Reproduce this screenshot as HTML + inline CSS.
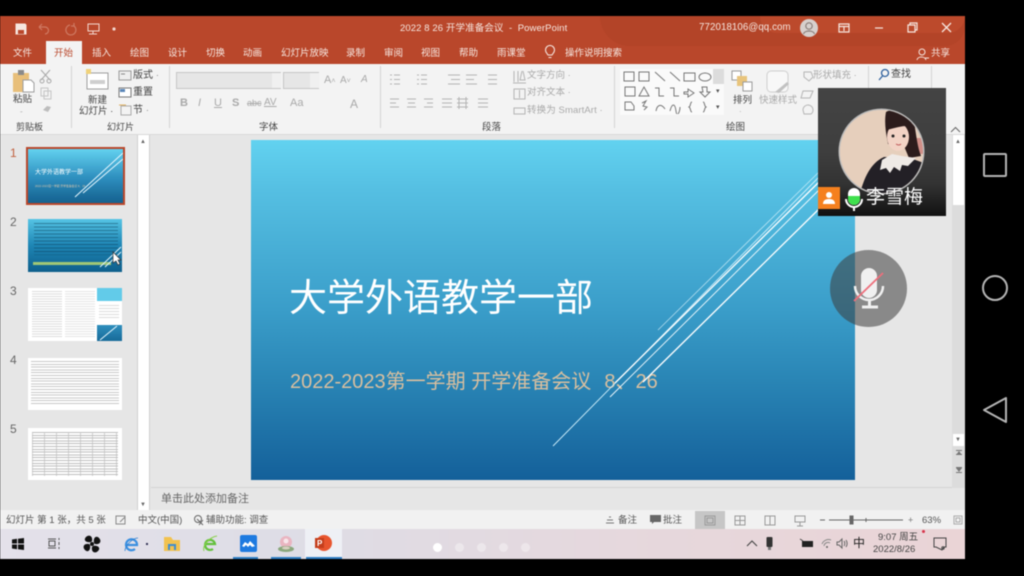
<!DOCTYPE html>
<html lang="zh"><head><meta charset="utf-8"><style>
html,body{margin:0;padding:0;background:#000}
body{width:1024px;height:576px;position:relative;overflow:hidden;font-family:"Liberation Sans","Noto Sans CJK SC",sans-serif;color:#444}
#s,#s div,#s svg{position:absolute}
#s{left:0;top:0;width:1024px;height:576px;filter:blur(.5px)}
.t{white-space:nowrap;line-height:1;font-size:9.5px;color:#444}
.g{color:#a9a9a9}
.w{color:#f6e6df}
.sep{width:1px;background:#d4d4d4;top:66px;height:62px}
.n{font-size:12px;color:#666;left:10px;line-height:1}
</style></head><body><div id="s">
<!-- window -->
<div style="left:0;top:16px;width:965px;height:543px;background:#e6e6e6"></div>
<!-- title bar -->
<div style="left:0;top:16px;width:965px;height:48px;background:#b9472b"></div>
<div style="left:600px;top:16px;width:365px;height:30px;background:#ab4026;border-radius:0 0 60px 90px;opacity:.4"></div>
<div style="left:760px;top:16px;width:205px;height:17px;background:#c24e2e;border-radius:0 0 30px 30px;opacity:.6"></div>
<svg style="left:14px;top:22px" width="110" height="14" viewBox="0 0 110 14" fill="none" stroke="#f3d8cf"><path d="M2 2h9l1 1v9H2z" fill="#f6e6df" stroke="#f6e6df"/><path d="M4 8h6v4H4z" fill="#b9472b" stroke="none"/><path d="M25 5l3-3M25 5l3 3M25 5h6a3.500 3.500 0 0 1 0 7" stroke="#cf7a63" stroke-width="1.200"/><path d="M56 3a5 5 0 1 0 4 1M60 1v3h-3" stroke="#cf7a63" stroke-width="1.200"/><rect x="74" y="2" width="11" height="7" stroke="#f3d8cf"/><path d="M79 9v3M75 12h8" stroke="#f3d8cf"/><circle cx="100" cy="7" r="1.600" fill="#f3d8cf" stroke="none"/></svg>
<div class="t w" style="left:400px;top:24px;font-size:9.5px;letter-spacing:.1px">2022 8 26 开学准备会议 &nbsp;-&nbsp; PowerPoint</div>
<div class="t w" style="left:699px;top:23px;font-size:9.7px;letter-spacing:.1px">772018106@qq.com</div>
<svg style="left:799px;top:18px" width="20" height="20" viewBox="0 0 20 20"><circle cx="10" cy="10" r="9" fill="#d7d0cd"/><circle cx="10" cy="8" r="3.200" fill="none" stroke="#8b7f7a" stroke-width="1.200"/><path d="M4.500 16c1-4 10-4 11 0" fill="none" stroke="#8b7f7a" stroke-width="1.200"/></svg>
<svg style="left:836px;top:20px" width="120" height="16" viewBox="0 0 120 16" fill="none" stroke="#f6e6df" stroke-width="1.200"><path d="M3 4h10v8H3zM3 6.500h10" /><path d="M8 7v4" /><path d="M39 8h8"/><path d="M72 5h7v7h-7zM74 5V3h7v7h-2"/><path d="M106 3l9 9M115 3l-9 9" stroke-width="1.300"/></svg>
<!-- tabs -->
<div style="left:46px;top:41px;width:36px;height:23px;background:#f3f3f3"></div>
<div class="t w" style="left:13px;top:49px">文件</div>
<div class="t" style="left:54px;top:49px;color:#b9472b">开始</div>
<div class="t w" style="left:92px;top:49px">插入</div>
<div class="t w" style="left:130px;top:49px">绘图</div>
<div class="t w" style="left:168px;top:49px">设计</div>
<div class="t w" style="left:206px;top:49px">切换</div>
<div class="t w" style="left:243px;top:49px">动画</div>
<div class="t w" style="left:281px;top:49px">幻灯片放映</div>
<div class="t w" style="left:346px;top:49px">录制</div>
<div class="t w" style="left:384px;top:49px">审阅</div>
<div class="t w" style="left:421px;top:49px">视图</div>
<div class="t w" style="left:459px;top:49px">帮助</div>
<div class="t w" style="left:497px;top:49px">雨课堂</div>
<svg style="left:544px;top:45px" width="12" height="15" viewBox="0 0 12 15" fill="none" stroke="#f6e6df" stroke-width="1.100"><path d="M4 10C3 8 1.500 7.500 1.500 5a4.500 4.500 0 0 1 9 0c0 2.500-1.500 3-2.500 5zM4.500 12.500h3"/></svg>
<div class="t w" style="left:565px;top:49px">操作说明搜索</div>
<svg style="left:916px;top:47px" width="14" height="14" viewBox="0 0 14 14" fill="none" stroke="#f6e6df"><circle cx="6" cy="5" r="3"/><path d="M1 13c.5-4 8-4 9 0M9 11h4"/></svg>
<div class="t w" style="left:931px;top:49px">共享</div>
<!-- ribbon -->
<div style="left:0;top:64px;width:965px;height:71px;background:#f3f3f3"></div>
<div style="left:0;top:134px;width:965px;height:1px;background:#d9d9d9"></div>
<div class="sep" style="left:71px"></div><div class="sep" style="left:169px"></div><div class="sep" style="left:380px"></div><div class="sep" style="left:614px"></div><div class="sep" style="left:868px"></div><div class="sep" style="left:931px"></div>
<svg style="left:950px;top:126px" width="11" height="7" viewBox="0 0 11 7" fill="none" stroke="#666"><path d="M1 6l4.500-4.500L10 6"/></svg>
<!-- clipboard -->
<svg style="left:12px;top:69px" width="24" height="25" viewBox="0 0 24 25"><rect x="1" y="4" width="16" height="19" fill="#e8bf7a"/><rect x="6" y="1" width="6" height="5" fill="#8a8a8a"/><path d="M11 11h8l3 3v9H11z" fill="#fff" stroke="#9d9d9d"/></svg>
<svg style="left:38px;top:68px" width="22" height="48" viewBox="0 0 22 48" fill="none" stroke="#a8a8a8"><path d="M3 2l9 10M12 2L3 12"/><circle cx="4" cy="13" r="2"/><circle cx="11" cy="13" r="2"/><path d="M3 20h7v8H3zM6 23h7v8H6z" stroke="#c4c4c4"/><path d="M5 42l4-4 4 1-3 5z" fill="#bdbdbd" stroke="none"/></svg>
<div class="t" style="left:13px;top:95px;font-size:9.500px">粘贴</div>
<div class="t" style="left:16px;top:123px;font-size:9px">剪贴板</div>
<div class="t g" style="left:20px;top:108px;font-size:8px">-</div>
<!-- slides -->
<svg style="left:85px;top:68px" width="25" height="23" viewBox="0 0 25 23"><rect x="2" y="5" width="21" height="16" fill="#fff" stroke="#9d9d9d"/><rect x="5" y="12" width="15" height="4" fill="#cfcfcf"/><rect x="1" y="1" width="5" height="5" fill="#f0d27a"/></svg>
<div class="t" style="left:88px;top:96px;font-size:9.500px">新建</div>
<div class="t" style="left:79px;top:107px;font-size:9.500px">幻灯片 ·</div>
<div class="t" style="left:107px;top:123px;font-size:9px">幻灯片</div>
<svg style="left:118px;top:69px" width="15" height="48" viewBox="0 0 15 48" fill="none"><rect x="1" y="2" width="12" height="9" stroke="#999" fill="#eee"/><path d="M3 5h4" stroke="#888"/><rect x="1" y="19" width="12" height="9" stroke="#777" fill="#fff"/><path d="M2 20h5v3H2z" fill="#5a86b8"/><rect x="3" y="37" width="10" height="9" stroke="#aaa"/><path d="M1 36h7" stroke="#e0b060"/></svg>
<div class="t" style="left:133px;top:71px;font-size:10px">版式 <span style="color:#999">·</span></div>
<div class="t" style="left:133px;top:88px;font-size:10px">重置</div>
<div class="t" style="left:133px;top:106px;font-size:10px">节 <span style="color:#999">·</span></div>
<!-- font -->
<div style="left:176px;top:72px;width:105px;height:17px;background:#e6e6e6;border:1px solid #c6c6c6;box-sizing:border-box"></div>
<div style="left:272px;top:73px;width:9px;height:15px;background:#f0f0f0"></div>
<div style="left:283px;top:72px;width:36px;height:17px;background:#e6e6e6;border:1px solid #c6c6c6;box-sizing:border-box"></div>
<div style="left:310px;top:73px;width:9px;height:15px;background:#f0f0f0"></div>
<div class="t g" style="left:324px;top:75px;font-size:11px">A<span style="font-size:7px">˄</span></div>
<div class="t g" style="left:340px;top:76px;font-size:10px">A<span style="font-size:7px">˅</span></div>
<div class="t g" style="left:361px;top:75px;font-size:10px;font-style:italic">A</div>
<div class="t g" style="left:180px;top:98px;font-size:11px;font-weight:bold">B</div>
<div class="t g" style="left:198px;top:98px;font-size:11px;font-style:italic">I</div>
<div class="t g" style="left:214px;top:98px;font-size:11px;text-decoration:underline">U</div>
<div class="t g" style="left:232px;top:98px;font-size:11px;font-weight:bold">S</div>
<div class="t g" style="left:247px;top:99px;font-size:9px;text-decoration:line-through">abc</div>
<div class="t g" style="left:264px;top:98px;font-size:10px;text-decoration:underline">AV</div>
<div class="t g" style="left:290px;top:98px;font-size:11px">Aa</div>
<div class="t g" style="left:350px;top:98px;font-size:12px">A</div>
<div class="t" style="left:259px;top:123px;font-size:9.500px">字体</div>
<!-- paragraph -->
<svg style="left:388px;top:73px" width="120" height="38" viewBox="0 0 120 38" fill="none" stroke="#b4b4b4"><path d="M2 2h2M2 6.500h2M2 11h2M6 2h6M6 6.500h6M6 11h6M29 2h2M29 6.500h2M29 11h2M33 2h6M33 6.500h6M33 11h6M60 2h12M63 6.500h9M60 11h12M78 2h11M78 6.500h8M78 11h11M100 2h9M100 6.500h9M100 11h9M2 26h9M2 30h6M2 34h9M19 26h9M20 30h7M19 34h9M36 26h9M39 30h6M36 34h9M54 26h10M54 30h10M54 34h10M69 26h11M69 30h11M69 34h11M71 24v12M78 24v12M90 26h10M90 30h10M90 34h10"/></svg>
<svg style="left:512px;top:68px" width="16" height="50" viewBox="0 0 16 50" fill="none" stroke="#b4b4b4"><path d="M2 3v11M6 3v11M10 3l-2 9h5l-2-9M1 15h13M2 21h11v10H2zM7.500 22v8M2 40h11v6H2z"/></svg>
<div class="t g" style="left:527px;top:71px;font-size:9.500px">文字方向 ·</div>
<div class="t g" style="left:527px;top:88px;font-size:9.500px">对齐文本 ·</div>
<div class="t g" style="left:527px;top:106px;font-size:9.500px;letter-spacing:.1px">转换为 SmartArt ·</div>
<div class="t" style="left:482px;top:123px;font-size:9.500px">段落</div>
<!-- drawing -->
<div style="left:620px;top:69px;width:104px;height:46px;background:#fafafa"></div>
<div style="left:713px;top:69px;width:11px;height:15px;background:#dcdcdc"></div>
<div class="t" style="left:716px;top:88px;font-size:7px;color:#555">▾</div>
<div class="t" style="left:716px;top:104px;font-size:7px;color:#555">▾</div>
<svg style="left:622px;top:70px" width="92" height="44" viewBox="0 0 92 44" fill="none" stroke="#777"><rect x="2" y="2" width="10" height="9"/><rect x="17" y="2" width="10" height="9"/><path d="M33 2l10 9M48 2l10 9"/><rect x="62" y="3" width="11" height="8"/><ellipse cx="83" cy="7" rx="6" ry="4"/><rect x="3" y="17" width="10" height="9"/><path d="M17 26l5-9 5 9zM33 18h4v8h5M48 18h4v8h5M62 22h4v-3l6 4-6 4v-3h-4zM80 17h5v5h3l-5 5-5-5h3z"/><path d="M3 36v-4h6l3 4v4H3zM20 33l4-2-3 5 4 1-3 3M34 41c1-6 5-8 9-2M48 41c2-8 5-8 6 0s4 0 4-4"/><path d="M70 32c-2 0-1 4-3 5 2 1 1 5 3 5M81 32c2 0 1 4 3 5-2 1-1 5-3 5"/></svg>
<svg style="left:731px;top:70px" width="22" height="24" viewBox="0 0 22 24"><rect x="1" y="1" width="9" height="9" fill="#fff" stroke="#999"/><rect x="6" y="6" width="10" height="10" fill="#e8c47c"/><rect x="12" y="12" width="9" height="9" fill="#fff" stroke="#999"/></svg>
<div class="t" style="left:733px;top:96px;font-size:9.500px">排列</div>
<div class="t g" style="left:739px;top:108px;font-size:8px">·</div>
<svg style="left:766px;top:70px" width="26" height="24" viewBox="0 0 26 24"><rect x="1" y="1" width="21" height="21" rx="4" fill="#f8f8f8" stroke="#cfcfcf"/><path d="M9 22l12-10 2 2-10 9z" fill="#c2c2c2"/></svg>
<div class="t g" style="left:759px;top:96px;font-size:9.500px">快速样式</div>
<svg style="left:800px;top:68px" width="17" height="50" viewBox="0 0 17 50" fill="none" stroke="#b5b5b5"><path d="M4 4h7l2 5-4 4-5-4zM3 23h10l-3 7H1zM3 42a5 5 0 1 1 8 4H4z"/></svg>
<div class="t g" style="left:813px;top:71px;font-size:9.500px">形状填充 ·</div>
<div class="t" style="left:726px;top:123px;font-size:9.500px">绘图</div>
<svg style="left:878px;top:68px" width="12" height="13" viewBox="0 0 12 13" fill="none" stroke="#2d5f9c" stroke-width="1.300"><circle cx="7" cy="5" r="3.500"/><path d="M4.500 8L1 12"/></svg>
<div class="t" style="left:891px;top:70px;font-size:10px">查找</div>
<!-- thumbnails pane scrollbar -->
<div style="left:137px;top:135px;width:13px;height:375px;background:#fff;border-left:1px solid #d0d0d0;border-right:1px solid #d0d0d0;box-sizing:border-box"></div>
<div class="t" style="left:140px;top:139px;font-size:6px;color:#666">▲</div>
<div class="t" style="left:140px;top:502px;font-size:6px;color:#666">▼</div>
<div class="n" style="top:147px;color:#c0613f">1</div>
<div class="n" style="top:216px">2</div>
<div class="n" style="top:285px">3</div>
<div class="n" style="top:354px">4</div>
<div class="n" style="top:423px">5</div>
<!-- thumb 1 -->
<div style="left:26px;top:147px;width:99px;height:58px;box-sizing:border-box;border:2px solid #b9472b;background:linear-gradient(#62d1ef,#2d8dbd 55%,#14618f);overflow:hidden">
<div style="left:7px;top:21px;font-size:6px;line-height:1;color:#fff;white-space:nowrap">大学外语教学一部</div>
<div style="left:7px;top:36px;font-size:2.800px;line-height:1;color:#d6c5ab;white-space:nowrap">2022-2023第一学期 开学准备会议 8、26</div>
<svg style="left:45px;top:0" width="52" height="54" viewBox="0 0 52 54" fill="none" stroke="#e8f8ff"><path d="M2 48L50 4M10 44L50 10" /></svg>
</div>
<!-- thumb 2 -->
<div style="left:28px;top:219px;width:94px;height:53px;background:linear-gradient(#55c4e4,#1e85b4 50%,#0e5f8c);overflow:hidden">
<div style="left:6px;top:4px;width:84px;height:32px;background:repeating-linear-gradient(#083a55 0 1px,transparent 1px 3.500px);opacity:.45"></div>
<div style="left:5px;top:43px;width:78px;height:3px;background:#cfe66a;opacity:.75"></div>
<svg style="left:70px;top:22px" width="24" height="28" viewBox="0 0 24 28" fill="none" stroke="#dff5ff"><path d="M2 26L23 6M7 26L23 11"/></svg>
</div>
<svg style="left:112px;top:251px" width="10" height="15" viewBox="0 0 10 15"><path d="M1 1v11l3-2 2 4 2-1-2-4h3z" fill="#fff" stroke="#333" stroke-width=".7"/></svg>
<!-- thumb 3 -->
<div style="left:28px;top:288px;width:94px;height:53px;background:#fff;overflow:hidden">
<div style="left:4px;top:3px;width:30px;height:46px;background:repeating-linear-gradient(#8a8a8a 0 1px,transparent 1px 2.500px);opacity:.3"></div>
<div style="left:37px;top:3px;width:30px;height:46px;background:repeating-linear-gradient(#8a8a8a 0 1px,transparent 1px 2.500px);opacity:.22"></div>
<div style="left:69px;top:0;width:25px;height:13px;background:#62cbe9"></div>
<div style="left:69px;top:37px;width:25px;height:16px;background:linear-gradient(#2f8fbd,#176a99)"></div>
<div style="left:71px;top:17px;width:20px;height:14px;background:repeating-linear-gradient(#8a8a8a 0 1px,transparent 1px 3px);opacity:.3"></div>
<svg style="left:70px;top:37px" width="24" height="16" viewBox="0 0 24 16" fill="none" stroke="#e8f8ff"><path d="M2 15L19 1"/></svg>
</div>
<!-- thumb 4 -->
<div style="left:28px;top:358px;width:94px;height:52px;background:#fff;overflow:hidden">
<div style="left:3px;top:3px;width:88px;height:44px;background:repeating-linear-gradient(#666 0 1px,transparent 1px 2.800px);opacity:.35"></div>
</div>
<!-- thumb 5 -->
<div style="left:28px;top:428px;width:94px;height:52px;background:#fff;overflow:hidden">
<div style="left:4px;top:4px;width:86px;height:44px;background:repeating-linear-gradient(#666 0 1px,transparent 1px 2.800px),repeating-linear-gradient(90deg,#999 0 1px,transparent 1px 12px);opacity:.42"></div>
</div>
<!-- slide -->
<div style="left:251px;top:140px;width:604px;height:340px;background:linear-gradient(#62d2f0 0,#55bfe2 15%,#3a9dc9 50%,#2a86b6 70%,#14609a 100%);overflow:hidden">
<div style="left:38px;top:140px;font-size:38px;line-height:1;color:#fff;white-space:nowrap">大学外语教学一部</div>
<div style="left:39px;top:232px;font-size:20px;line-height:1;color:#d9bf9f;white-space:nowrap">2022-2023第一学期 开学准备会议 &nbsp;<span style="margin-left:2px">8、26</span></div>
<svg style="left:0;top:0" width="604" height="340" viewBox="0 0 604 340" fill="none" stroke="#fff"><path d="M302 306L570 35" stroke="#cdeefb" stroke-width=".9"/><path d="M407 190L570 30" stroke="#e9f9ff" stroke-width=".8" opacity=".7"/><path d="M364 243L570 40" stroke="#fff" stroke-width="1.300"/><path d="M359 257L570 48" stroke="#f2fbff" stroke-width=".9"/><path d="M392 242L570 67" stroke="#fff" stroke-width="1.300"/></svg>
</div>
<!-- right pane scrollbar -->
<div style="left:952px;top:135px;width:13px;height:353px;background:#dcdcdc"></div>
<div style="left:953px;top:135px;width:11px;height:70px;background:#fff"></div>
<div class="t" style="left:955px;top:139px;font-size:6px;color:#666">▲</div>
<div style="left:953px;top:434px;width:11px;height:12px;background:#fff"></div>
<div class="t" style="left:955px;top:437px;font-size:6px;color:#666">▼</div>
<svg style="left:954px;top:448px" width="10" height="26" viewBox="0 0 10 26" fill="#777"><path d="M2 2h6v1H2zM5 3l3 4H2zM2 6h6v1H2zM2 19h6v1H2zM5 24l3-4H2zM2 24h6v1H2z"/></svg>
<!-- notes -->
<div style="left:151px;top:487px;width:801px;height:1px;background:#d3d3d3"></div>
<div class="t" style="left:161px;top:494px;font-size:11px;color:#666">单击此处添加备注</div>
<div style="left:0;top:510px;width:965px;height:19px;background:#f1f1f1"></div>
<div class="t" style="left:6px;top:516px;font-size:9.500px;color:#555">幻灯片 第 1 张，共 5 张</div>
<svg style="left:115px;top:515px" width="12" height="10" viewBox="0 0 12 10" fill="none" stroke="#888"><path d="M1 1h9v8H1zM5 7l5-5"/></svg>
<div class="t" style="left:138px;top:516px;font-size:9.500px;color:#555">中文(中国)</div>
<svg style="left:193px;top:515px" width="12" height="11" viewBox="0 0 12 11" fill="none" stroke="#666"><circle cx="5" cy="4" r="3.500"/><path d="M4 4l6 6M10 5l-4 5"/></svg>
<div class="t" style="left:206px;top:516px;font-size:9.500px;color:#555">辅助功能: 调查</div>
<div class="t" style="left:618px;top:516px;font-size:9.500px;color:#555">备注</div>
<svg style="left:605px;top:516px" width="11" height="9" viewBox="0 0 11 9" stroke="#777" fill="none"><path d="M4 1h2M2 4h6M1 7h8"/></svg>
<svg style="left:650px;top:515px" width="11" height="10" viewBox="0 0 11 10"><path d="M0 0h11v7H4L2 9V7H0z" fill="#666"/></svg>
<div class="t" style="left:663px;top:516px;font-size:9.500px;color:#555">批注</div>
<div style="left:695px;top:511px;width:30px;height:18px;background:#c6c6c6"></div>
<svg style="left:704px;top:515px" width="110" height="12" viewBox="0 0 110 12" fill="none" stroke="#999"><rect x="1" y="1" width="10" height="9"/><path d="M3 3h6v5H3z"/><rect x="31" y="1" width="10" height="9"/><path d="M36 1v9M31 5.500h10"/><rect x="61" y="1" width="10" height="9"/><path d="M66 1v9"/><rect x="91" y="1" width="10" height="6"/><path d="M96 7v4M93 11h6"/></svg>
<svg style="left:818px;top:513px" width="98" height="14" viewBox="0 0 98 14" fill="none" stroke="#666"><path d="M2 7h5M11 7h74"/><rect x="32" y="3" width="3" height="8" fill="#666"/><path d="M48 5v4"/></svg>
<div class="t" style="left:908px;top:516px;font-size:9px;color:#777">+</div>
<div class="t" style="left:922px;top:516px;font-size:9.500px;color:#555">63%</div>
<svg style="left:953px;top:515px" width="10" height="10" viewBox="0 0 10 10" fill="none" stroke="#aaa"><path d="M1 1h8v8H1zM3 3h4v4H3z"/></svg>
<!-- taskbar -->
<div style="left:0;top:529px;width:965px;height:30px;background:linear-gradient(90deg,#e4e1ea 0,#dedde6 30%,#e6d8dd 65%,#ead4d6 100%)"></div>
<div style="left:305px;top:529px;width:37px;height:30px;background:#eef0f5"></div>
<div style="left:233px;top:557px;width:25px;height:2px;background:#2f7fc4"></div>
<div style="left:271px;top:557px;width:30px;height:2px;background:#2f7fc4"></div>
<div style="left:306px;top:557px;width:36px;height:2px;background:#2f7fc4"></div>
<svg style="left:12px;top:538px" width="12" height="12" viewBox="0 0 12 12" fill="#111"><path d="M0 1.500l5-.7V5.500H0zM6 .7L12 0v5.500H6zM0 6.500h5v4.700l-5-.7zM6 6.500h6V12l-6-.8z"/></svg>
<svg style="left:47px;top:537px" width="14" height="13" viewBox="0 0 14 13" fill="none" stroke="#555"><path d="M1 2h8M1 11h8M2 4h6v5H2zM12 1v2M12 5v3M12 10v2"/></svg>
<svg style="left:83px;top:535px" width="18" height="18" viewBox="0 0 18 18" fill="#111"><circle cx="9" cy="9" r="2" /><path d="M8 7C3 8 0 5 3 2s7-1 6 4zM11 8c-1-5 2-8 5-5s1 7-4 6zM10 11c5-1 8 2 5 5s-7 1-6-4zM7 10c1 5-2 8-5 5s-1-7 4-6z"/></svg>
<svg style="left:124px;top:536px" width="16" height="17" viewBox="0 0 16 17" fill="none"><path d="M2 9h11a5.500 5.500 0 1 0-2 4" stroke="#3a8fe0" stroke-width="2.200"/><path d="M1 15c0-6 8-13 13-13" stroke="#2f7fd0" stroke-width=".8"/></svg>
<div style="left:146px;top:543px;width:2px;height:2px;background:#335"></div>
<svg style="left:164px;top:537px" width="16" height="14" viewBox="0 0 16 14"><path d="M0 0h7l2 3h7v11H0z" fill="#f2c24f"/><path d="M4 13V7h8v6h-2V9H6v4z" fill="#3e8dd0"/></svg>
<svg style="left:202px;top:535px" width="16" height="18" viewBox="0 0 16 18" fill="none"><path d="M3 9h10a5 5 0 1 0-2 5" stroke="#62c03c" stroke-width="2.200"/><path d="M2 16C0 10 8 2 15 1" stroke="#8ad04f"/></svg>
<svg style="left:240px;top:535px" width="17" height="17" viewBox="0 0 17 17"><rect width="17" height="17" rx="2" fill="#1e7ae0"/><path d="M2 11l3-4 3 2 2-3 5 5-3 1-2-2-2 2-2-2-2 2z" fill="#fff"/></svg>
<svg style="left:276px;top:534px" width="20" height="19" viewBox="0 0 20 19"><circle cx="10" cy="8" r="6" fill="#e9b5c0"/><circle cx="10" cy="7" r="2.500" fill="#f8e6ea"/><ellipse cx="10" cy="15" rx="8" ry="3" fill="#8aa77c"/><ellipse cx="10" cy="14" rx="4" ry="1.500" fill="#d8d0c0"/></svg>
<svg style="left:314px;top:534px" width="18" height="18" viewBox="0 0 18 18"><circle cx="10" cy="9" r="8" fill="#e8552e"/><rect x="1" y="4" width="9" height="10" fill="#c43e1c"/><text x="3" y="12" font-size="8" font-weight="bold" fill="#fff" font-family="Liberation Sans">P</text></svg>
<!-- tray -->
<svg style="left:746px;top:538px" width="12" height="10" viewBox="0 0 12 10" fill="none" stroke="#444" stroke-width="1.100"><path d="M1 8l5-5 5 5"/></svg>
<svg style="left:765px;top:537px" width="9" height="13" viewBox="0 0 9 13"><rect x="1.500" y="0" width="6" height="10" rx="1" fill="#333"/><path d="M3 10h3v3H3z" fill="#777"/></svg>
<svg style="left:799px;top:538px" width="14" height="11" viewBox="0 0 14 11"><rect x="3" y="3" width="11" height="6" fill="#222"/><path d="M1 1l3 2" stroke="#444"/></svg>
<svg style="left:821px;top:538px" width="11" height="11" viewBox="0 0 11 11" fill="none" stroke="#888"><path d="M1 6a7 7 0 0 1 9-4M3 8a4 4 0 0 1 6-3"/><circle cx="6" cy="9" r="1" fill="#666" stroke="none"/></svg>
<svg style="left:836px;top:538px" width="12" height="11" viewBox="0 0 12 11" fill="none" stroke="#666"><path d="M1 4h2l3-3v9L3 7H1zM8 3c1 1 1 4 0 5M10 2c1.500 2 1.500 5 0 7"/></svg>
<div class="t" style="left:853px;top:537px;font-size:12px;color:#222">中</div>
<div class="t" style="left:878px;top:533px;font-size:9.500px;color:#444">9:07 周五</div>
<div class="t" style="left:873px;top:545px;font-size:9.500px;color:#444">2022/8/26</div>
<div style="left:922px;top:530px;width:3px;height:3px;border-radius:50%;background:#d8334a"></div>
<svg style="left:933px;top:537px" width="15" height="14" viewBox="0 0 15 14" fill="none" stroke="#444"><path d="M1 1h12v9h-2l-2 3-6-3H1z"/><circle cx="10" cy="11" r="1.200"/></svg>
<!-- page dots -->
<div style="left:433px;top:543px;width:9px;height:9px;border-radius:50%;background:#fff"></div>
<div style="left:455px;top:543px;width:9px;height:9px;border-radius:50%;background:#fff;opacity:.35"></div>
<div style="left:477px;top:543px;width:9px;height:9px;border-radius:50%;background:#fff;opacity:.35"></div>
<div style="left:499px;top:543px;width:9px;height:9px;border-radius:50%;background:#fff;opacity:.35"></div>
<div style="left:521px;top:543px;width:9px;height:9px;border-radius:50%;background:#fff;opacity:.35"></div>
<!-- video tile -->
<div style="left:818px;top:88px;width:128px;height:128px;background:linear-gradient(#444 0,#3e3e3e 50%,#333 75%,#111 100%);overflow:hidden">
<div style="left:22px;top:22px;width:83px;height:83px;border-radius:50%;background:#e8d2bf;box-shadow:0 0 0 1.500px #bbb;overflow:hidden">
<svg style="left:0;top:0" width="83" height="83" viewBox="0 0 83 83"><rect width="83" height="83" fill="#e6cfbc"/><path d="M72 28h11v16H72z" fill="#d08f88"/><path d="M46 2c8-5 24-3 28 10 2 10 3 24 7 34l-12 2-5-12-16-2c-2-10-4-22-2-32z" fill="#2c1c1c"/><ellipse cx="58" cy="27" rx="11" ry="14" fill="#f2d3c5"/><path d="M46 20c6-1 16-5 25-4l1-7-18-6-8 6z" fill="#2c1c1c"/><circle cx="53" cy="26" r="1.500" fill="#222"/><circle cx="64" cy="26" r="1.500" fill="#222"/><path d="M56 34q3 2 5 0" stroke="#c05a5a" fill="none"/><path d="M20 83c4-14 10-30 24-36 10 0 28 0 39 6v30z" fill="#232026"/><path d="M42 50l10-6 10 2 14 2-8 8-6-1-2 6-6-4-4 6-4-5-6 2z" fill="#efeae6"/></svg>
</div>
<div style="left:0;top:99px;width:22px;height:22px;background:#f5801e"></div>
<svg style="left:4px;top:103px" width="14" height="14" viewBox="0 0 14 14" fill="#fff"><circle cx="7" cy="4" r="3"/><path d="M1 13c0-4 3-5 6-5s6 1 6 5z"/></svg>
<svg style="left:27px;top:99px" width="18" height="26" viewBox="0 0 18 26"><rect x="3" y="1" width="12" height="17" rx="6" fill="#fff"/><path d="M3 9h12v3a6 6 0 0 1-12 0z" fill="#3fe04d"/><path d="M1 12a8 8 0 0 0 16 0" fill="none" stroke="#fff" stroke-width="2"/><path d="M9 20v4" stroke="#fff" stroke-width="2"/></svg>
<div style="left:48px;top:100px;font-size:19px;line-height:1;color:#fff;white-space:nowrap">李雪梅</div>
</div>
<!-- mic overlay -->
<div style="left:830px;top:250px;width:77px;height:77px;border-radius:50%;background:rgba(60,60,60,.55)"></div>
<svg style="left:850px;top:266px" width="40" height="46" viewBox="0 0 40 46" fill="none"><rect x="11" y="2" width="16" height="30" rx="8" fill="#f0f0f0"/><path d="M5 20a14 14 0 0 0 28 0" stroke="#f0f0f0" stroke-width="2.500"/><path d="M19.500 34v6M12 41h16" stroke="#f0f0f0" stroke-width="3"/><path d="M4 35L33 7" stroke="#ee6f7c" stroke-width="1.800"/></svg>
<!-- android nav -->
<svg style="left:965px;top:130px" width="59" height="300" viewBox="0 0 59 300" fill="none" stroke="#b4b4b4" stroke-width="2"><rect x="19" y="24" width="22" height="22" rx="1"/><circle cx="30" cy="158" r="12"/><path d="M41 268v24l-22-12z" stroke-linejoin="round"/></svg>
</div></body></html>
